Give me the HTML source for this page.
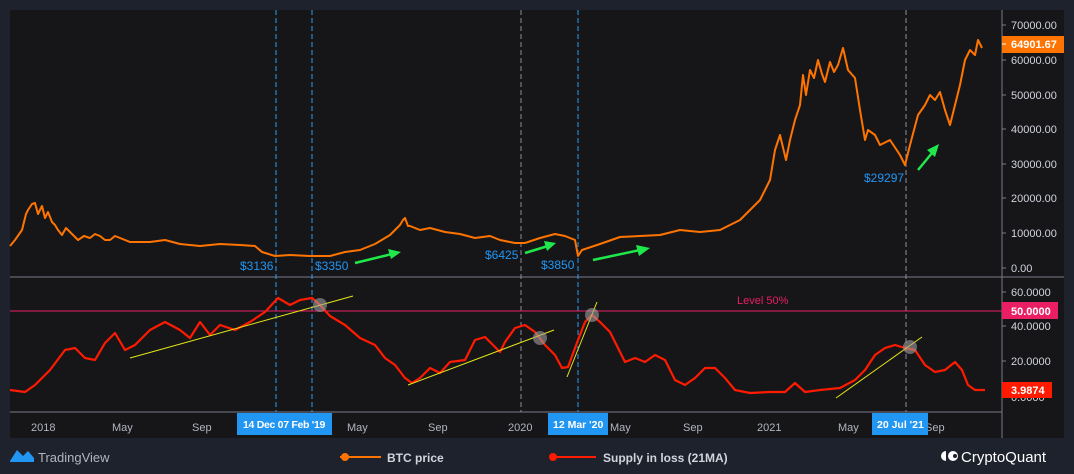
<!DOCTYPE html>
<html><head><style>
body{margin:0;width:1074px;height:474px;background:#1e222d;overflow:hidden;font-family:"Liberation Sans",sans-serif}
svg{position:absolute;left:0;top:0}
</style></head><body>
<svg width="1074" height="474" viewBox="0 0 1074 474">
<rect x="10" y="10" width="1054" height="428" fill="#161619"/>
<g font-size="11" fill="#d1d4dc">
<line x1="1002" y1="10" x2="1002" y2="438" stroke="#787b86"/>
<line x1="10" y1="277" x2="1064" y2="277" stroke="#787b86"/>
<line x1="10" y1="412" x2="1002" y2="412" stroke="#787b86"/>
<g stroke="#787b86"><line x1="1002" y1="25" x2="1006" y2="25"/><line x1="1002" y1="60" x2="1006" y2="60"/><line x1="1002" y1="95" x2="1006" y2="95"/><line x1="1002" y1="129" x2="1006" y2="129"/><line x1="1002" y1="164" x2="1006" y2="164"/><line x1="1002" y1="198" x2="1006" y2="198"/><line x1="1002" y1="233" x2="1006" y2="233"/><line x1="1002" y1="268" x2="1006" y2="268"/><line x1="1002" y1="292" x2="1006" y2="292"/><line x1="1002" y1="326" x2="1006" y2="326"/><line x1="1002" y1="361" x2="1006" y2="361"/></g>
<text x="1011" y="29">70000.00</text><text x="1011" y="99">50000.00</text><text x="1011" y="133">40000.00</text><text x="1011" y="168">30000.00</text><text x="1011" y="202">20000.00</text><text x="1011" y="237">10000.00</text><text x="1011" y="272">0.00</text><text x="1011" y="64">60000.00</text>
<text x="1011" y="296">60.0000</text><text x="1011" y="330">40.0000</text><text x="1011" y="365">20.0000</text><text x="1011" y="401">0.0000</text>
</g>
<g stroke-dasharray="5,3" stroke-width="1">
<line x1="276" y1="10" x2="276" y2="412" stroke="#2a9df4"/>
<line x1="312" y1="10" x2="312" y2="412" stroke="#2a9df4"/>
<line x1="521" y1="10" x2="521" y2="412" stroke="#8c8f99"/>
<line x1="578" y1="10" x2="578" y2="412" stroke="#2a9df4"/>
<line x1="906" y1="10" x2="906" y2="412" stroke="#8c8f99"/>
</g>
<line x1="10" y1="311" x2="1002" y2="311" stroke="#e91e63"/>
<text x="737" y="304" fill="#e91e63" font-size="11">Level 50%</text>
<polyline fill="none" stroke="#ff7400" stroke-width="2" stroke-linejoin="round" points="10,246 15,240 22,230 26,214 28,210 32,204 35,203 38,214 42,206 45,218 48,212 52,222 55,225 58,230 62,235 66,228 70,232 74,236 78,240 84,236 90,238 95,234 100,236 105,240 110,240 115,236 120,238 130,242 150,242 165,240 180,244 200,246 220,244 240,245 255,246 262,252 275,256 290,255 310,256 330,256 345,252 360,250 375,244 390,235 400,225 403,220 405,218 408,226 410,226 420,230 430,228 445,232 460,234 475,238 490,236 500,240 515,243 525,243 540,238 555,234 565,236 575,240 578,256 582,250 600,244 620,237 640,236 660,235 680,230 700,232 720,230 740,220 750,210 760,200 770,180 775,150 780,135 786,160 790,140 795,120 800,105 803,75 806,95 810,70 814,78 818,60 822,74 825,82 830,62 834,72 838,65 843,48 848,70 855,78 860,110 865,140 868,130 875,135 880,145 890,140 900,155 905,165 910,145 918,115 925,105 930,95 935,100 940,92 945,110 950,125 955,105 960,85 965,60 970,50 975,55 978,40 982,48"/>
<polyline fill="none" stroke="#ff1a00" stroke-width="2.2" stroke-linejoin="round" points="10,390 25,392 35,385 50,370 65,350 75,348 85,358 95,360 105,343 115,333 125,350 135,345 150,330 165,322 180,330 190,338 200,322 210,335 220,325 235,330 250,322 265,312 278,298 290,305 300,300 312,298 320,305 330,316 345,325 360,338 375,345 385,358 395,365 405,378 412,383 420,378 430,368 440,373 450,362 465,360 475,340 485,337 500,352 505,342 515,328 525,325 535,332 545,345 555,355 562,368 568,367 578,340 585,322 592,315 600,322 610,332 620,352 625,362 635,358 645,362 655,355 665,360 675,380 685,385 695,378 705,368 715,368 725,378 735,390 750,393 770,392 785,392 795,383 805,392 820,390 840,388 855,380 865,370 875,355 885,348 895,345 905,348 915,350 925,365 935,372 945,370 955,362 962,370 968,385 975,390 985,390"/>
<g stroke="#e6e619" stroke-width="1"><line x1="130" y1="358" x2="353" y2="296"/><line x1="408" y1="385" x2="554" y2="330"/><line x1="567" y1="377" x2="597" y2="302"/><line x1="836" y1="398" x2="922" y2="337"/></g>
<g fill="#9e9e9e" opacity="0.6"><circle cx="320" cy="305" r="7"/><circle cx="540" cy="338" r="7"/><circle cx="592" cy="315" r="7"/><circle cx="910" cy="347" r="7"/></g>
<g stroke="#1ee84a" stroke-width="2.5" fill="#1ee84a">
<line x1="355" y1="263" x2="392" y2="254"/><polygon points="401,252 388,249 391,259" stroke="none"/>
<line x1="525" y1="253" x2="548" y2="246"/><polygon points="556,243 544,241 547,251" stroke="none"/>
<line x1="593" y1="260" x2="640" y2="250"/><polygon points="650,248 636,245 639,256" stroke="none"/>
<line x1="918" y1="170" x2="932" y2="153"/><polygon points="939,144 927,150 935,157" stroke="none"/>
</g>
<g fill="#2196f3" font-size="12"><text x="240" y="270">$3136</text><text x="315" y="270">$3350</text><text x="485" y="259">$6425</text><text x="541" y="269">$3850</text><text x="864" y="182">$29297</text></g>
<g font-size="11" fill="#b2b5be"><text x="31" y="431">2018</text><text x="112" y="431">May</text><text x="192" y="431">Sep</text><text x="347" y="431">May</text><text x="428" y="431">Sep</text><text x="508" y="431">2020</text><text x="610" y="431">May</text><text x="683" y="431">Sep</text><text x="757" y="431">2021</text><text x="838" y="431">May</text><text x="925" y="431">Sep</text></g>
<g font-size="11" fill="#fff" font-weight="bold">
<rect x="237" y="413" width="95" height="22" fill="#2196f3"/><text x="243" y="428" font-size="10.5" letter-spacing="-0.3">14 Dec  07 Feb '19</text>
<rect x="548" y="413" width="60" height="22" fill="#2196f3"/><text x="553" y="428" font-size="10.5">12 Mar '20</text>
<rect x="872" y="413" width="56" height="22" fill="#2196f3"/><text x="877" y="428" font-size="10.5">20 Jul '21</text>
<rect x="1002" y="36" width="62" height="17" fill="#ff7400"/><line x1="1002" y1="44" x2="1006" y2="44" stroke="#fff"/><text x="1011" y="48">64901.67</text>
<rect x="1002" y="302" width="56" height="17" fill="#e91e63"/><text x="1011" y="315">50.0000</text>
<rect x="1002" y="382" width="50" height="16" fill="#ff1a00"/><text x="1011" y="394">3.9874</text>
</g>
<path d="M10,461 L17,450 L23,456 L28,451 L34,458 L34,462 L10,462Z" fill="#2196f3"/>
<text x="38" y="462" fill="#b2b5be" font-size="13">TradingView</text>
<line x1="340" y1="457" x2="381" y2="457" stroke="#ff7400" stroke-width="2"/><circle cx="345" cy="457" r="4" fill="#ff7400"/>
<text x="387" y="462" fill="#d1d4dc" font-size="12" font-weight="bold">BTC price</text>
<line x1="550" y1="457" x2="596" y2="457" stroke="#ff1a00" stroke-width="2"/><circle cx="553" cy="457" r="4" fill="#ff1a00"/>
<text x="603" y="462" fill="#d1d4dc" font-size="12" font-weight="bold">Supply in loss (21MA)</text>
<path d="M946,451 a5,5 0 0 0 0,10Z" fill="#fff"/><circle cx="953" cy="456" r="5" fill="#fff"/><circle cx="955" cy="456" r="2" fill="#1e222d"/>
<text x="961" y="462" fill="#fff" font-size="15">CryptoQuant</text>
</svg>
</body></html>
